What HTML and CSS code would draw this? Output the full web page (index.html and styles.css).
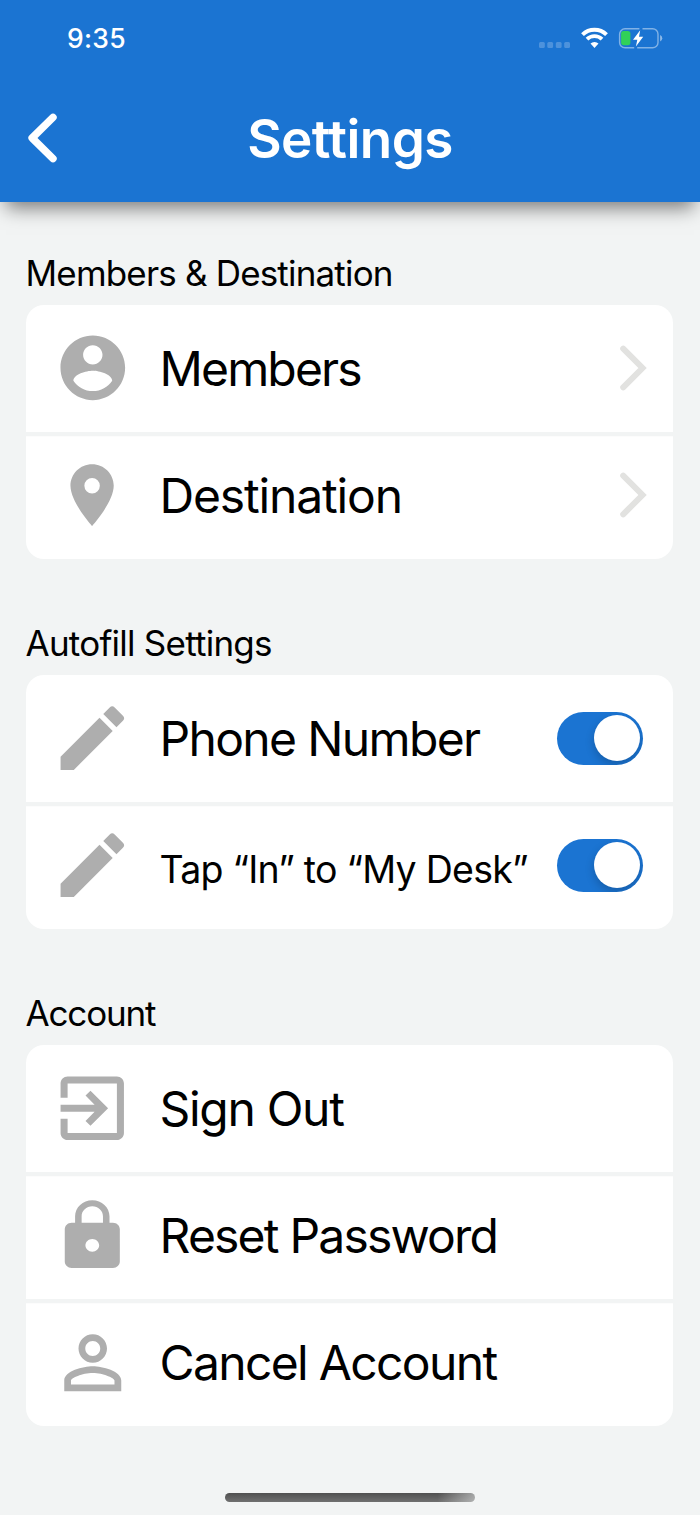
FILE: index.html
```html
<!DOCTYPE html>
<html lang="en">
<head>
<meta charset="utf-8">
<title>Settings</title>
<link rel="stylesheet" href="styles.css">
</head>
<body>
<svg class="defs" aria-hidden="true">
  <symbol id="pencil" viewBox="0 0 24 24"><path d="M3 17.25V21h3.75L17.81 9.94l-3.75-3.75L3 17.25zM20.71 7.04a.996.996 0 0 0 0-1.41l-2.34-2.34a.996.996 0 0 0-1.41 0l-1.83 1.83 3.75 3.75 1.83-1.83z"/></symbol>
  <symbol id="chevron" viewBox="0 0 28 46"><path d="M4.2 3.7 23.5 23 4.2 42.3" fill="none" stroke="#e2e2e0" stroke-width="6" stroke-linecap="round"/></symbol>
</svg>
<header class="header">
  <div class="status">
    <span class="time">9:35</span>
    <div class="indicators">
      <svg class="signal" viewBox="0 0 32 28"><g fill="#fff" opacity=".22"><rect x="0" y="18" width="5.8" height="6" rx="1.5"/><rect x="8.3" y="18" width="5.8" height="6" rx="1.5"/><rect x="16.8" y="18" width="5.8" height="6" rx="1.5"/><rect x="25.2" y="18" width="5.8" height="6" rx="1.5"/></g></svg>
      <svg class="wifi" viewBox="0 0 27 28"><g fill="none" stroke="#fff"><path d="M1.5 10.6a17.2 17.2 0 0 1 24 0" stroke-width="4"/><path d="M6 15.2a10.8 10.8 0 0 1 15 0" stroke-width="3.8"/></g><path d="M9.5 19.6a5.8 5.8 0 0 1 8 0L13.5 24z" fill="#fff"/></svg>
      <svg class="battery" viewBox="0 0 45 28"><g fill="none" stroke="#fff" stroke-opacity=".45" stroke-width="1.4"><path d="M21.4 4.8H7a5.4 5.4 0 0 0-5.4 5.4v8.2A5.4 5.4 0 0 0 7 23.8h9.2"/><path d="M24.5 4.8h10A5.4 5.4 0 0 1 40 10.2v8.2a5.4 5.4 0 0 1-5.4 5.4H19.2"/></g><path d="M42.1 11a3.6 3.6 0 0 1 0 6.6z" fill="#fff" fill-opacity=".5"/><rect x="3.1" y="7" width="9.3" height="14.2" rx="2.6" fill="#31d158"/><path d="M22.2 6.2 15 15.8h4.3L17.9 22.4 25.2 12.7H21z" fill="#fff"/></svg>
    </div>
  </div>
  <div class="titlebar">
    <svg class="back" viewBox="0 0 36 52"><path d="M29 5.3 8.1 26 29 46.7" fill="none" stroke="#fff" stroke-width="7.4" stroke-linecap="round" stroke-linejoin="round"/></svg>
    <h1 class="title">Settings</h1>
  </div>
</header>
<main class="content">
  <section class="section">
    <h2 class="label label-members">Members &amp; Destination</h2>
    <div class="card">
      <div class="row">
        <div class="slot"><svg class="icon account" viewBox="0 0 24 24"><path d="M12 2C6.48 2 2 6.48 2 12s4.48 10 10 10 10-4.48 10-10S17.52 2 12 2zm0 3c1.66 0 3 1.34 3 3s-1.34 3-3 3-3-1.34-3-3 1.34-3 3-3zm0 14.2c-2.5 0-4.71-1.28-6-3.22.03-1.99 4-3.08 6-3.08 1.99 0 5.97 1.09 6 3.08-1.29 1.94-3.5 3.22-6 3.22z"/></svg></div>
        <span class="text text-members">Members</span>
        <svg class="chevron"><use href="#chevron"/></svg>
      </div>
      <div class="row">
        <div class="slot"><svg class="icon place" viewBox="0 0 24 24"><path d="M12 2C8.13 2 5 5.13 5 9c0 5.25 7 13 7 13s7-7.75 7-13c0-3.87-3.13-7-7-7zm0 9.500a2.500 2.500 0 0 1 0-5 2.500 2.500 0 0 1 0 5z"/></svg></div>
        <span class="text text-destination">Destination</span>
        <svg class="chevron"><use href="#chevron"/></svg>
      </div>
    </div>
  </section>
  <section class="section">
    <h2 class="label label-autofill">Autofill Settings</h2>
    <div class="card">
      <div class="row">
        <div class="slot"><svg class="icon pencil"><use href="#pencil"/></svg></div>
        <span class="text text-phone">Phone Number</span>
        <span class="toggle"><span class="thumb"></span></span>
      </div>
      <div class="row">
        <div class="slot"><svg class="icon pencil"><use href="#pencil"/></svg></div>
        <span class="text text-small">Tap “In” to “My Desk”</span>
        <span class="toggle"><span class="thumb"></span></span>
      </div>
    </div>
  </section>
  <section class="section">
    <h2 class="label label-account">Account</h2>
    <div class="card">
      <div class="row">
        <div class="slot"><svg class="icon exit" viewBox="0 0 24 24"><path d="M10.090 15.590L11.500 17l5-5-5-5-1.410 1.410L12.670 11H3v2h9.670l-2.580 2.590zM19 3H5c-1.110 0-2 .9-2 2v4h2V5h14v14H5v-4H3v4c0 1.100.89 2 2 2h14c1.100 0 2-.9 2-2V5c0-1.100-.9-2-2-2z"/></svg></div>
        <span class="text text-signout">Sign Out</span>
      </div>
      <div class="row">
        <div class="slot"><svg class="icon lock" viewBox="0 0 24 24" preserveAspectRatio="none"><path d="M18 8h-1V6c0-2.760-2.240-5-5-5S7 3.240 7 6v2H6c-1.100 0-2 .9-2 2v10c0 1.100.9 2 2 2h12c1.100 0 2-.9 2-2V10c0-1.100-.9-2-2-2zm-6 9c-1.100 0-2-.9-2-2s.9-2 2-2 2 .9 2 2-.9 2-2 2zm3.100-9H8.900V6c0-1.710 1.390-3.100 3.100-3.100 1.710 0 3.100 1.390 3.100 3.100v2z"/></svg></div>
        <span class="text text-reset">Reset Password</span>
      </div>
      <div class="row">
        <div class="slot"><svg class="icon person" viewBox="0 0 24 24"><path d="M12 5.900c1.160 0 2.100.94 2.100 2.100s-.94 2.100-2.100 2.100S9.900 9.160 9.900 8s.94-2.100 2.100-2.100m0 9c2.970 0 6.100 1.460 6.100 2.100v1.100H5.900V17c0-.64 3.130-2.100 6.100-2.100M12 4C9.790 4 8 5.790 8 8s1.790 4 4 4 4-1.790 4-4-1.790-4-4-4zm0 9c-2.670 0-8 1.340-8 4v3h16v-3c0-2.660-5.330-4-8-4z"/></svg></div>
        <span class="text text-cancel">Cancel Account</span>
      </div>
    </div>
  </section>
</main>
<footer class="footer"><div class="home"></div></footer>
</body>
</html>
```
FILE: styles.css
```css
* { box-sizing: border-box; }
body {
  margin: 0;
  height: 1515px;
  display: flex;
  flex-direction: column;
  background: #f2f4f4;
  color: #000;
  font-family: Inter, "Liberation Sans", sans-serif;
  overflow: hidden;
}
svg { display: block; flex: none; }
.defs { position: absolute; width: 0; height: 0; }
.header {
  flex: none;
  height: 202px;
  background: #1b74d2;
  color: #fff;
  box-shadow: 0 12px 18px -6px rgba(0, 0, 0, .5);
}
.status {
  height: 76px;
  padding: 0 37px 0 67px;
  display: flex;
  justify-content: space-between;
  align-items: center;
}
.time { font-size: 26.5px; font-weight: 500; line-height: 32px; letter-spacing: .3px; }
.indicators { display: flex; height: 28px; }
.signal { width: 32px; height: 28px; margin-right: 9.5px; }
.wifi { width: 27px; height: 28px; margin-right: 10.5px; }
.battery { width: 45px; height: 28px; }
.titlebar {
  height: 124px;
  padding: 0 24px;
  display: grid;
  grid-template-columns: 36px 1fr 36px;
  align-items: center;
}
.back { width: 36px; height: 52px; }
.title { margin: 0; padding-top: 2px; text-align: center; font-size: 53px; font-weight: 600; line-height: 64px; letter-spacing: -.55px; }
.content { flex: 1; padding: 46.5px 27px 0 25.5px; }
.section { margin-bottom: 60.1px; }
.label {
  margin: 0;
  height: 56px;
  font-size: 35px;
  font-weight: 400;
  line-height: 48px;
  white-space: nowrap;
}
.label-members { letter-spacing: -.82px; }
.label-autofill { letter-spacing: -.76px; }
.label-account { letter-spacing: -1.15px; }
.card { border-radius: 18px; background: #fff; overflow: hidden; }
.row {
  height: 127.06px;
  padding: 0 30px 0 34.5px;
  display: flex;
  align-items: center;
}
.row + .row { box-shadow: inset 0 4.3px #f2f4f4; }
.slot { width: 65px; display: flex; justify-content: center; flex: none; }
.icon { fill: #aeaeae; }
.account { width: 77.6px; height: 77.6px; }
.place { width: 74.2px; height: 74.2px; }
.pencil, .exit { width: 84.5px; height: 84.5px; }
.lock { width: 82.6px; height: 77.4px; }
.person { width: 85.5px; height: 85.5px; }
.text {
  flex: 1;
  padding: 2px 0 0 34.5px;
  font-size: 48px;
  line-height: 60px;
  white-space: nowrap;
}
.text-members { letter-spacing: -1.85px; }
.text-destination { letter-spacing: -1.15px; }
.text-phone { letter-spacing: -1.65px; }
.text-signout { letter-spacing: -1.3px; }
.text-reset { letter-spacing: -1.8px; }
.text-cancel { letter-spacing: -1.65px; }
.text-small { font-size: 37.5px; padding-top: 9px; letter-spacing: -.75px; }
.chevron { width: 28px; height: 46px; margin-right: -4px; }
.toggle {
  flex: none;
  width: 86.3px;
  height: 52.6px;
  padding: 0 3.3px;
  display: flex;
  align-items: center;
  justify-content: flex-end;
  border-radius: 27px;
  background: #1b74d2;
  overflow: hidden;
}
.thumb { width: 46px; height: 46px; border-radius: 50%; background: #fff; box-shadow: 0 4px 10px rgba(0, 0, 0, .2); }
.footer { height: 22.5px; display: flex; justify-content: center; flex: none; }
.home {
  width: 250px;
  height: 9px;
  border-radius: 5px;
  background: linear-gradient(90deg, rgba(242, 244, 244, 0) 85%, rgba(242, 244, 244, .5) 100%), linear-gradient(#505050, #707070);
}
```
